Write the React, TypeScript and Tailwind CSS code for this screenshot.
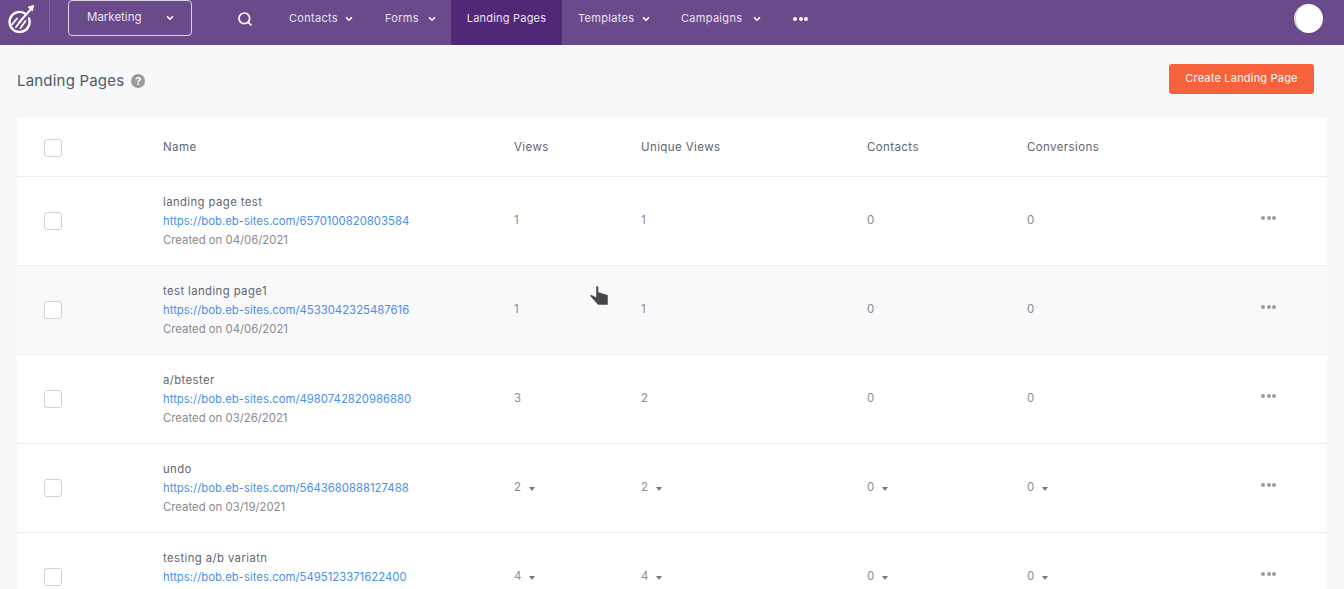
import { ChevronDown, Search } from "lucide-react";

const COLS = "grid grid-cols-[146px_351px_127px_226px_160px_234px_1fr]";

const rows = [
  { name: "landing page test", url: "https://bob.eb-sites.com/6570100820803584", date: "04/06/2021", stats: ["1", "1", "0", "0"], caret: false },
  { name: "test landing page1", url: "https://bob.eb-sites.com/4533042325487616", date: "04/06/2021", stats: ["1", "1", "0", "0"], caret: false, hover: true },
  { name: "a/btester", url: "https://bob.eb-sites.com/4980742820986880", date: "03/26/2021", stats: ["3", "2", "0", "0"], caret: false },
  { name: "undo", url: "https://bob.eb-sites.com/5643680888127488", date: "03/19/2021", stats: ["2", "2", "0", "0"], caret: true },
  { name: "testing a/b variatn", url: "https://bob.eb-sites.com/5495123371622400", date: "03/19/2021", stats: ["4", "4", "0", "0"], caret: true },
];

function Logo() {
  return (
    <svg width="30" height="30" viewBox="0 0 30 30" fill="none" stroke="white" strokeLinecap="round">
      <path d="M20 10.500A10 10 0 1 0 24 15.500" strokeWidth="2.400" />
      <path d="M7 21.500l5-6M11 24l7-9M15.500 25l5-7" strokeWidth="1.800" />
      <path d="M14 19.500L27 5" strokeWidth="2" />
      <path d="M23.500 4l5-1.500-1 5z" fill="white" strokeWidth="1" />
    </svg>
  );
}

function Dots({ className }: { className: string }) {
  return (
    <span className={`flex gap-[1.5px] ${className}`}>
      <i className="w-[4px] h-[4px] rounded-full bg-current" />
      <i className="w-[4px] h-[4px] rounded-full bg-current" />
      <i className="w-[4px] h-[4px] rounded-full bg-current" />
    </span>
  );
}

function NavItem({ label, className }: { label: string; className: string }) {
  return (
    <a className={`flex items-center pb-[8px] text-[11px] tracking-[0.3px] text-[#e9e2f0] ${className}`}>
      {label}
      <ChevronDown size={10} strokeWidth={4} className="text-white" />
    </a>
  );
}

function Stat({ value, caret }: { value: string; caret: boolean }) {
  return (
    <div className="flex items-center text-[11.5px] text-[#8a8a92]">
      {value}
      {caret && <span className="ml-[8px] mt-[2px] border-x-[3px] border-t-[4px] border-x-transparent border-t-[#77777f]" />}
    </div>
  );
}

function Checkbox() {
  return (
    <div className="pl-[27px]">
      <span className="block w-[18px] h-[18px] rounded-[3px] border border-[#cfcfd4] bg-white" />
    </div>
  );
}

export default function App() {
  return (
    <div className="relative h-screen overflow-hidden bg-[#f7f8fa] font-['Inter','Liberation_Sans',sans-serif]">
      <nav className="flex h-[45px] bg-[#6b4a8b] pl-[5px]">
        <div className="flex items-center h-full w-[44px] pb-[9px]">
          <Logo />
        </div>
        <div className="w-px h-[33px] bg-[#7f649b]" />
        <button className="flex items-center justify-between w-[124px] h-[36px] ml-[18px] pl-[18px] pr-[16px] border border-[#d9d0e2] rounded-[4px] text-[11.5px] text-[#e9e2f0]">
          Marketing
          <ChevronDown size={10} strokeWidth={4} className="text-white" />
        </button>
        <div className="flex items-center ml-[45px] w-[52px] pb-[8px]">
          <Search size={16} strokeWidth={2.600} className="text-white" />
        </div>
        <NavItem label="Contacts" className="w-[96px] gap-[6px]" />
        <NavItem label="Forms" className="w-[66px] gap-[8px]" />
        <a className="flex items-center justify-center w-[111px] pb-[8px] bg-[#502876] text-[11px] tracking-[0.2px] text-[#e9e2f0]">Landing Pages</a>
        <NavItem label="Templates" className="w-[103px] ml-[16px] gap-[7px]" />
        <NavItem label="Campaigns" className="w-[112px] gap-[10px]" />
        <div className="flex items-center pb-[8px]">
          <Dots className="text-white" />
        </div>
        <div className="flex items-center ml-auto mr-[21px] pb-[8px]">
          <div className="w-[29px] h-[29px] rounded-full bg-white border-l-2 border-[#d8d8d8]" />
        </div>
      </nav>

      <header className="flex items-center justify-between h-[67px] mb-[6px] pl-[17px] pr-[30px]">
        <div className="flex items-center gap-[7px] pt-[5px]">
          <h1 className="text-[15px] text-[#4a5b6e] tracking-[0.2px]">Landing Pages</h1>
          <span className="flex items-center justify-center w-[14px] h-[14px] rounded-full bg-[#9b9b9b] text-white text-[11px] font-bold">?</span>
        </div>
        <button className="w-[145px] h-[30px] rounded-[3px] bg-[#f7623c] text-white text-[11px] tracking-[0.2px]">Create Landing Page</button>
      </header>

      <section className="mx-[17px] bg-white">
        <div className={`${COLS} items-center h-[59px] pt-[1px] border-b border-[#eceef1] text-[11.5px] text-[#5f6672] tracking-[0.4px]`}>
          <Checkbox />
          <div>Name</div>
          <div>Views</div>
          <div>Unique Views</div>
          <div>Contacts</div>
          <div>Conversions</div>
        </div>
        {rows.map((row) => (
          <div key={row.url} className={`${COLS} items-center h-[89px] border-b border-[#eceef1] ${row.hover ? "bg-[#f9f9fb]" : ""}`}>
            <Checkbox />
            <div className="flex flex-col gap-[4px] text-[11.35px] leading-[15px]">
              <span className="text-[#5f6672] tracking-[0.4px]">{row.name}</span>
              <a className="text-[#4b8fe8]">{row.url}</a>
              <span className="text-[#8a8a8f]">Created on {row.date}</span>
            </div>
            {row.stats.map((s, i) => (
              <Stat key={i} value={s} caret={row.caret} />
            ))}
            <div className="flex items-center pb-[6px]">
              <Dots className="text-[#9a9a9f]" />
            </div>
          </div>
        ))}
      </section>

      {/* mouse pointer caught in the capture */}
      <svg className="absolute left-[589px] top-[284px]" width="24" height="24" viewBox="0 0 24 24">
        <path d="M7 2h2.500v6l9.500 3v10h-10l-8-9 1-1.500 5 2.500z" fill="#45454a" stroke="white" strokeWidth="0.5" />
      </svg>
    </div>
  );
}
